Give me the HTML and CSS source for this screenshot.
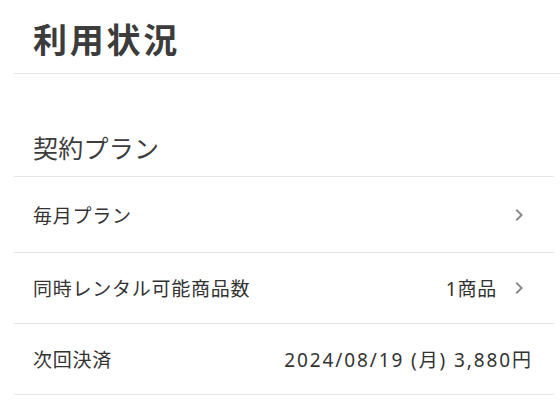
FILE: index.html
```html
<!DOCTYPE html>
<html lang="ja">
<head>
<meta charset="utf-8">
<link rel="stylesheet" href="styles.css">
</head>
<body>
<header class="page-header">
  <h1 class="page-title">利用状況</h1>
</header>
<section class="plan">
  <h2 class="plan-title">契約プラン</h2>
  <ul class="plan-list">
    <li class="plan-row plan-row--first">
      <span class="plan-label">毎月プラン</span>
      <span class="plan-value">
        <svg class="chev" viewBox="0 0 24 24" width="24" height="24"><path d="M10 6L8.59 7.41 13.17 12l-4.58 4.59L10 18l6-6z"/></svg>
      </span>
    </li>
    <li class="plan-row">
      <span class="plan-label">同時レンタル可能商品数</span>
      <span class="plan-value">
        <span class="value-text">1商品</span>
        <svg class="chev" viewBox="0 0 24 24" width="24" height="24"><path d="M10 6L8.59 7.41 13.17 12l-4.58 4.59L10 18l6-6z"/></svg>
      </span>
    </li>
    <li class="plan-row">
      <span class="plan-label">次回決済</span>
      <span class="plan-value">
        <span class="value-text value-date">2024/08/19 (月) 3,880円</span>
      </span>
    </li>
  </ul>
</section>
</body>
</html>
```
FILE: styles.css
```css
html, body {
  margin: 0;
  padding: 0;
  background: #fff;
}
body {
  font-family: "Noto Sans", "Noto Sans CJK JP", sans-serif;
  color: #333;
  overflow: hidden;
}
.page-header {
  margin-left: 14px;
  height: 73px;
  border-bottom: 1px solid #e6e6e6;
  display: flex;
  align-items: center;
  padding-left: 19px;
}
.page-title {
  margin: 0;
  font-size: 34px;
  font-weight: 700;
  letter-spacing: 0.08em;
  color: #3c3c3c;
  line-height: 1;
  padding-top: 6px;
}
.plan {
  margin: 0 6px 0 14px;
}
.plan-title {
  margin: 0;
  height: 103px;
  box-sizing: border-box;
  display: flex;
  align-items: flex-end;
  padding: 0 0 15px 19px;
  font-size: 25px;
  font-weight: 400;
  letter-spacing: 0.01em;
  line-height: 1;
  color: #3c3c3c;
  border-bottom: 1px solid #e6e6e6;
}
.plan-list {
  list-style: none;
  margin: 0;
  padding: 0;
}
.plan-row {
  display: flex;
  align-items: center;
  justify-content: space-between;
  height: 70px;
  padding: 0 23px 0 19px;
  border-bottom: 1px solid #e6e6e6;
  font-size: 19px;
  letter-spacing: 0.04em;
}
.plan-row--first {
  height: 75px;
}
.plan-label {
  color: #333;
}
.plan-value {
  display: flex;
  align-items: center;
  gap: 10px;
  color: #333;
}
.value-date {
  letter-spacing: 0.1em;
  margin-right: -2px;
}
.chev {
  display: block;
  fill: #8a8a8a;
}
```
